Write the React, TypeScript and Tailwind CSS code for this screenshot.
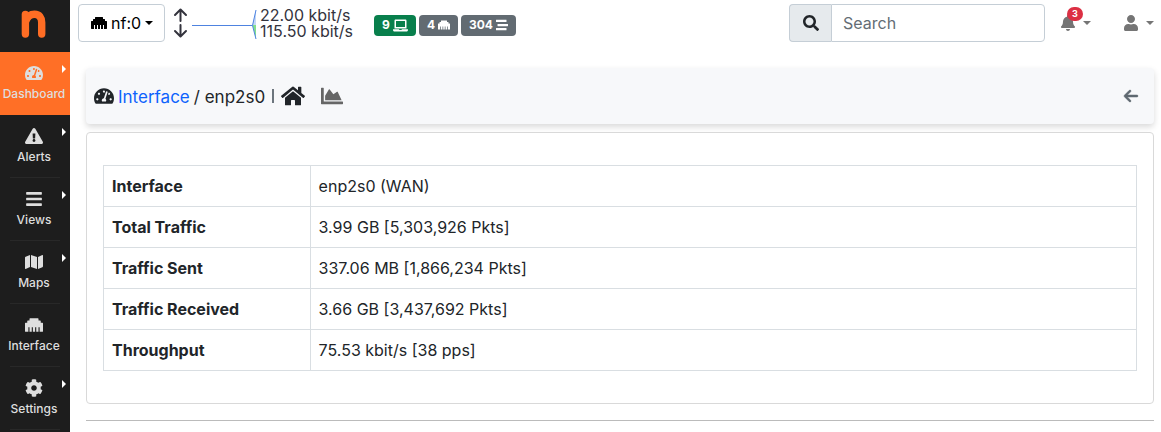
import type { ReactNode } from 'react';
import type { IconType } from 'react-icons';
import {
  FaBars,
  FaBell,
  FaChartArea,
  FaCog,
  FaEthernet,
  FaExclamationTriangle,
  FaHome,
  FaLaptop,
  FaMap,
  FaSearch,
  FaStream,
  FaTachometerAlt,
  FaUser,
} from 'react-icons/fa';
import { FaArrowLeft } from 'react-icons/fa6';

type NavEntry = { label: string; icon: IconType; submenu: boolean; active?: boolean };

const navEntries: NavEntry[] = [
  { label: 'Dashboard', icon: FaTachometerAlt, submenu: true, active: true },
  { label: 'Alerts', icon: FaExclamationTriangle, submenu: true },
  { label: 'Views', icon: FaBars, submenu: true },
  { label: 'Maps', icon: FaMap, submenu: true },
  { label: 'Interface', icon: FaEthernet, submenu: false },
  { label: 'Settings', icon: FaCog, submenu: true },
];

const rows = [
  ['Interface', 'enp2s0 (WAN)'],
  ['Total Traffic', '3.99 GB [5,303,926 Pkts]'],
  ['Traffic Sent', '337.06 MB [1,866,234 Pkts]'],
  ['Traffic Received', '3.66 GB [3,437,692 Pkts]'],
  ['Throughput', '75.53 kbit/s [38 pps]'],
];

function Caret() {
  return (
    <svg viewBox="0 0 8 4" className="h-1 w-2" fill="currentColor" aria-hidden="true">
      <path d="M0 0h8L4 4z" />
    </svg>
  );
}

function Logo() {
  return (
    <svg viewBox="0 0 25 28" className="h-7 w-[25px]" fill="none" stroke="#ff6d24" strokeLinecap="round" aria-hidden="true">
      <path strokeWidth="7.4" d="M4.400 4.400V24" />
      <path strokeWidth="7.4" d="M4.800 11C6.500 6.500 9.500 4.300 13.500 4.300 18.500 4.300 20.700 7.500 20.700 12.500V24" />
    </svg>
  );
}

function Sidebar() {
  return (
    <nav className="flex w-[70px] shrink-0 flex-col bg-[#1d1d1d]">
      <a href="#home" aria-label="Home" className="flex h-[52px] items-center justify-center pr-1 pb-1">
        <Logo />
      </a>
      <ul>
        {navEntries.map(({ label, icon: Icon, submenu, active }) => (
          <li key={label} className={active ? 'bg-[#ff6f26]' : ''}>
            <a
              href={`#${label.toLowerCase()}`}
              className="relative flex h-[63px] flex-col items-center gap-0.5 pt-3 pr-0.5 text-xs leading-5 font-medium text-[#dedede]"
            >
              <Icon className="size-[18px]" />
              <span>{label}</span>
              {submenu && (
                <svg viewBox="0 0 4 8" className="absolute top-[13px] right-1 h-2 w-1" fill="#fff" aria-hidden="true">
                  <path d="M0 0l4 4-4 4z" />
                </svg>
              )}
              {!active && <span className="absolute inset-x-2.5 bottom-0 border-b border-[#282828]" />}
            </a>
          </li>
        ))}
      </ul>
    </nav>
  );
}

function Badge({ color, children }: { color: string; children: ReactNode }) {
  return (
    <a href="#hosts" className={`flex h-[21px] items-center gap-[3px] rounded px-2 text-xs font-bold text-white ${color}`}>
      {children}
    </a>
  );
}

function TopBar() {
  return (
    <header className="flex h-[46px] items-center pr-[7px] pl-2">
      <button type="button" className="flex h-[38px] items-center gap-1 rounded border border-[#c5ced6] pr-[11px] pl-3 text-base text-black">
        <FaEthernet />
        <span>nf:0</span>
        <Caret />
      </button>
      <svg
        viewBox="0 0 15 30"
        className="ml-2 h-[30px] w-[15px]"
        fill="none"
        stroke="#33333d"
        strokeWidth="2"
        strokeLinecap="round"
        strokeLinejoin="round"
        aria-hidden="true"
      >
        <path d="M7.500 13V2M2 7l5.500-5.500L13 7" />
        <path d="M7.500 17v11M2 23l5.500 5.500L13 23" />
      </svg>
      <svg viewBox="0 0 66 32" className="ml-1 h-8 w-[66px]" fill="none" aria-label="Traffic chart">
        <path d="M60.500 18L64 3v15z" fill="#c6d9f7" />
        <path d="M60.500 18L64 32V18z" fill="#83e08e" />
        <path d="M0 18.500h60.500L64 3M60.500 18.500L64 32" stroke="#4e83e0" />
      </svg>
      <div className="ml-0.5 w-[110px] text-base leading-4 whitespace-nowrap text-[#33333d]">
        <div>22.00 kbit/s</div>
        <div>115.50 kbit/s</div>
      </div>
      <div className="ml-1 flex gap-[3px] pt-1">
        <Badge color="bg-[#087f4c]">
          9 <FaLaptop className="size-[15px]" />
        </Badge>
        <Badge color="bg-[#626b72]">
          4 <FaEthernet />
        </Badge>
        <Badge color="bg-[#626b72]">
          304 <FaStream />
        </Badge>
      </div>
      <form className="ml-auto flex h-[38px] w-64">
        <label htmlFor="search" className="flex w-[42px] shrink-0 items-center justify-center rounded-l border border-r-0 border-[#c5ced6] bg-[#e6eaed] text-[#212529]">
          <FaSearch aria-label="Search" />
        </label>
        <input
          id="search"
          type="text"
          placeholder="Search"
          className="w-full min-w-0 rounded-r border border-[#c5ced6] px-[11px] text-base placeholder:text-[#646d75]"
        />
      </form>
      <button type="button" aria-label="Alerts" className="relative ml-[15px] flex items-center gap-[7px] text-[#757575]">
        <FaBell />
        <Caret />
        <span className="absolute -top-2 left-[7px] h-[14px] w-4 rounded-full bg-[#dc3044] text-center text-[9px] leading-[14px] font-bold text-white">
          3
        </span>
      </button>
      <button type="button" aria-label="User" className="ml-8 flex items-center gap-[7px] text-[#757575]">
        <FaUser />
        <Caret />
      </button>
    </header>
  );
}

export default function App() {
  return (
    <div className="flex min-h-screen bg-white font-['Inter',sans-serif] text-[#212529]">
      <Sidebar />
      <div className="min-w-0 flex-1">
        <TopBar />
        <main className="pt-[22px] pr-[7px] pl-4">
          <div className="flex h-14 items-center rounded bg-[#f7f8fa] px-2 text-[17px] leading-6 shadow-[0_3px_6px_rgba(0,0,0,0.15)]">
            <FaTachometerAlt className="mr-1 size-5" />
            <div className="flex gap-1 pt-0.5">
              <a href="#interface" className="text-[#0d62fd]">
                Interface
              </a>
              <span>/ enp2s0</span>
            </div>
            <span className="mx-[7px] h-[14px] border-l-2 border-[#6c757d]" />
            <a href="#home" aria-label="Home">
              <FaHome className="size-6" />
            </a>
            <a href="#chart" aria-label="Chart" className="ml-4 text-[#666]">
              <FaChartArea className="size-[22px]" />
            </a>
            <a href="#back" aria-label="Back" className="mr-[7px] ml-auto text-[#5f6870]">
              <FaArrowLeft className="size-4" stroke="currentColor" strokeWidth="16" />
            </a>
          </div>
          <section className="mt-2 rounded border border-[#d9d9d9] px-4 py-8">
            <table className="w-full border-collapse text-left text-base leading-6">
              <tbody>
                {rows.map(([name, value]) => (
                  <tr key={name}>
                    <th scope="row" className="w-1/5 border border-[#d9dee2] p-2 font-bold">
                      {name}
                    </th>
                    <td className="border border-[#d9dee2] p-2">{value}</td>
                  </tr>
                ))}
              </tbody>
            </table>
          </section>
          <hr className="mt-4 border-[#bbb]" />
        </main>
      </div>
    </div>
  );
}
